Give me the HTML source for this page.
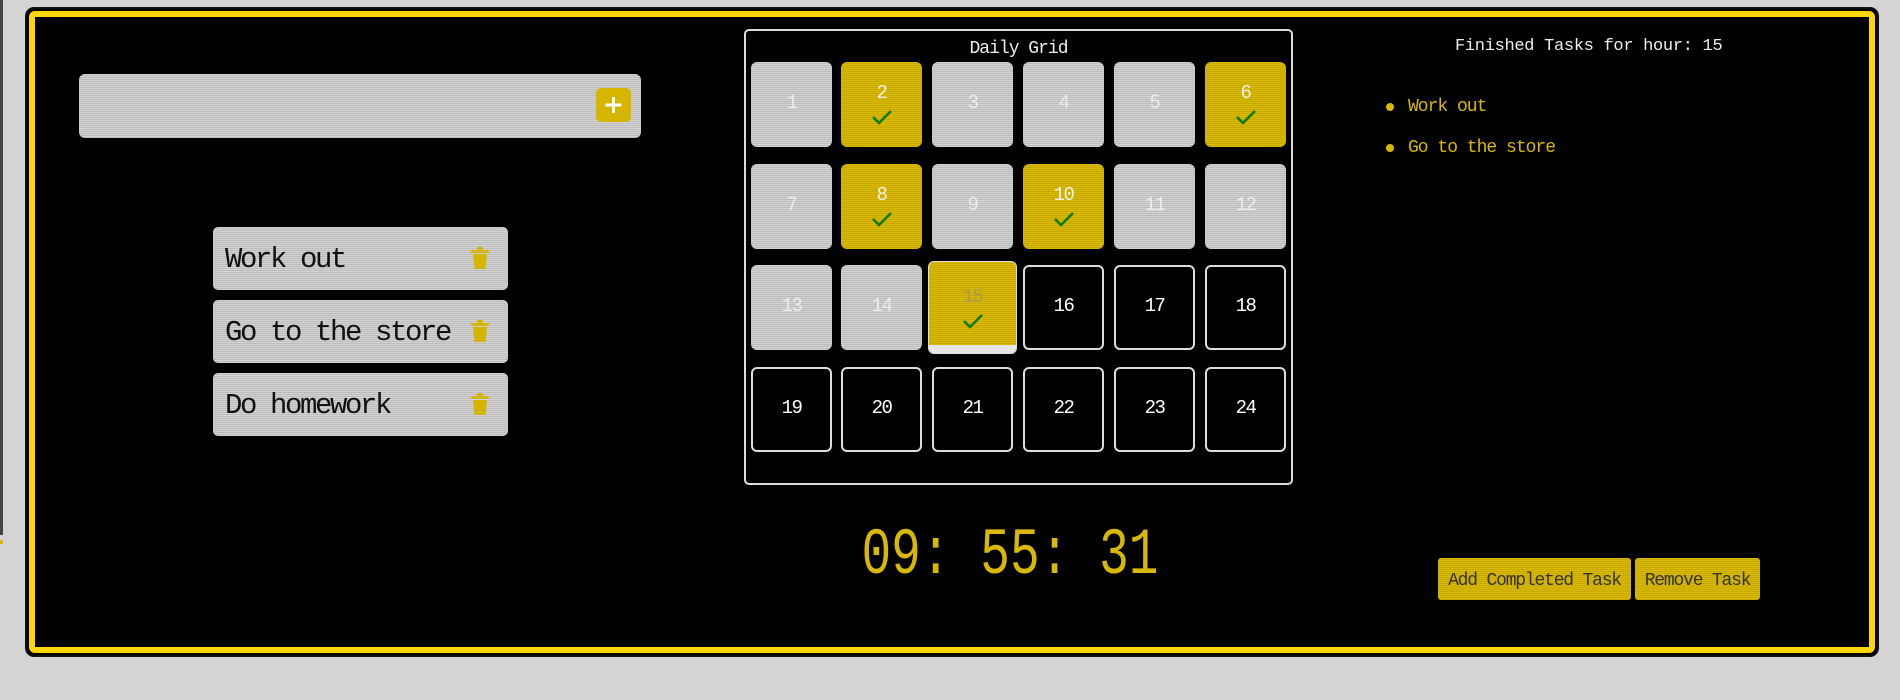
<!DOCTYPE html>
<html><head><meta charset="utf-8"><style>
*{margin:0;padding:0;box-sizing:border-box}
body{width:1900px;height:700px;background:#d4d4d4;position:relative;overflow:hidden;font-family:"Liberation Mono","NanumGothic",monospace}
.frame{position:absolute;left:25px;top:7px;width:1854px;height:650px;background:#000;border-radius:9px;border:2px solid #111}
.frame .y{position:absolute;left:2px;top:2px;right:2px;bottom:2px;border:6px solid #ffd500;border-radius:6px}
.stripe{background:repeating-linear-gradient(to bottom,#d2d2d2 0,#d2d2d2 1px,#bdbdbd 1px,#bdbdbd 2px)}
.ystripe{background:repeating-linear-gradient(to bottom,#d8b800 0,#d8b800 1px,#c9aa00 1px,#c9aa00 2px)}
.abs{position:absolute}
.input{left:79px;top:74px;width:562px;height:64px;border-radius:6px}
.plus{left:596px;top:88px;width:35px;height:34px;border-radius:5px;background:#d6b500}
.task{left:213px;width:295px;height:63px;border-radius:5px;font-size:29px;letter-spacing:-2.4px;color:#111;padding-left:12px;line-height:66px}
.trash{position:absolute;left:258px;top:20px}
.grid{left:744px;top:29px;width:549px;height:456px;border:2px solid #ddd;border-radius:5px}
.title{left:0;width:100%;top:8px;text-align:center;color:#eee;font-size:18px;letter-spacing:-1px}
.cell{position:absolute;width:81px;height:85px;border-radius:6px;text-align:center;font-size:19px;letter-spacing:-1.5px;color:#ececec}
.cell span{position:absolute;left:0;right:0;top:30px}
.cell.y span{top:20px;color:#f0f0f0}
.cell.b{background:#000;border:2px solid #ddd;color:#fff}
.cell svg{position:absolute;left:30px;top:47px}
.clock{left:810px;top:518px;width:400px;text-align:center;font-size:66px;color:#d8b800;transform:scaleX(0.75);letter-spacing:0}
.fin{left:1455px;top:37px;color:#eee;font-size:17px;letter-spacing:-0.3px}
.li{color:#d8b800;font-size:18px;letter-spacing:-1px}
.dot{width:8px;height:8px;border-radius:50%;background:#d8b800}
.btn{top:558px;height:42px;border-radius:3px;color:#333;font-size:18px;letter-spacing:-1.2px;line-height:46px;text-align:center}
</style></head><body>
<div class="abs" style="left:0;top:0;width:3px;height:535px;background:#444"></div>
<div class="abs" style="left:0;top:540px;width:3px;height:4px;background:#d8b800"></div>
<div class="frame"><div class="y"></div></div>

<div class="abs input stripe"></div>
<div class="abs plus"><svg width="35" height="34" viewBox="0 0 35 34"><path d="M17.5 9v16M9.5 17h16" stroke="#fff" stroke-width="3"/></svg></div>

<div class="abs task stripe" style="top:227px">Work out<svg class="trash" width="18" height="22" viewBox="0 0 18 22"><rect x="6" y="0" width="6" height="3" fill="#d6b500"/><rect x="0" y="3" width="18" height="3" rx="1" fill="#d6b500"/><path d="M2 7h14l-1.5 15h-11z" fill="#d6b500"/></svg></div>
<div class="abs task stripe" style="top:300px">Go to the store<svg class="trash" width="18" height="22" viewBox="0 0 18 22"><rect x="6" y="0" width="6" height="3" fill="#d6b500"/><rect x="0" y="3" width="18" height="3" rx="1" fill="#d6b500"/><path d="M2 7h14l-1.5 15h-11z" fill="#d6b500"/></svg></div>
<div class="abs task stripe" style="top:373px">Do homework<svg class="trash" width="18" height="22" viewBox="0 0 18 22"><rect x="6" y="0" width="6" height="3" fill="#d6b500"/><rect x="0" y="3" width="18" height="3" rx="1" fill="#d6b500"/><path d="M2 7h14l-1.5 15h-11z" fill="#d6b500"/></svg></div>

<div class="abs grid"><div class="abs title">Daily Grid</div></div>

<div class="abs" style="left:0;top:0">
<div class="cell stripe" style="left:751px;top:62px"><span>1</span></div>
<div class="cell ystripe y" style="left:841px;top:62px"><span>2</span><svg width="22" height="16" viewBox="0 0 22 16"><path d="M2 8l6 6L20 2" fill="none" stroke="#0a7a0a" stroke-width="2.5"/></svg></div>
<div class="cell stripe" style="left:932px;top:62px"><span>3</span></div>
<div class="cell stripe" style="left:1023px;top:62px"><span>4</span></div>
<div class="cell stripe" style="left:1114px;top:62px"><span>5</span></div>
<div class="cell ystripe y" style="left:1205px;top:62px"><span>6</span><svg width="22" height="16" viewBox="0 0 22 16"><path d="M2 8l6 6L20 2" fill="none" stroke="#0a7a0a" stroke-width="2.5"/></svg></div>
<div class="cell stripe" style="left:751px;top:164px"><span>7</span></div>
<div class="cell ystripe y" style="left:841px;top:164px"><span>8</span><svg width="22" height="16" viewBox="0 0 22 16"><path d="M2 8l6 6L20 2" fill="none" stroke="#0a7a0a" stroke-width="2.5"/></svg></div>
<div class="cell stripe" style="left:932px;top:164px"><span>9</span></div>
<div class="cell ystripe y" style="left:1023px;top:164px"><span>10</span><svg width="22" height="16" viewBox="0 0 22 16"><path d="M2 8l6 6L20 2" fill="none" stroke="#0a7a0a" stroke-width="2.5"/></svg></div>
<div class="cell stripe" style="left:1114px;top:164px"><span>11</span></div>
<div class="cell stripe" style="left:1205px;top:164px"><span>12</span></div>
<div class="cell stripe" style="left:751px;top:265px"><span>13</span></div>
<div class="cell stripe" style="left:841px;top:265px"><span>14</span></div>
<div class="cell ystripe y" style="left:928px;top:261px;width:89px;height:93px;border:1px solid #ddd;overflow:hidden"><span style="top:24px;color:#aa9a55">15</span><svg style="left:33px;top:51px" width="22" height="16" viewBox="0 0 22 16"><path d="M2 8l6 6L20 2" fill="none" stroke="#0a7a0a" stroke-width="2.5"/></svg><div style="position:absolute;left:0;right:0;bottom:0;height:8px;background:#e6e6e6"></div></div>
<div class="cell b" style="left:1023px;top:265px"><span style="top:28px">16</span></div>
<div class="cell b" style="left:1114px;top:265px"><span style="top:28px">17</span></div>
<div class="cell b" style="left:1205px;top:265px"><span style="top:28px">18</span></div>
<div class="cell b" style="left:751px;top:367px"><span style="top:28px">19</span></div>
<div class="cell b" style="left:841px;top:367px"><span style="top:28px">20</span></div>
<div class="cell b" style="left:932px;top:367px"><span style="top:28px">21</span></div>
<div class="cell b" style="left:1023px;top:367px"><span style="top:28px">22</span></div>
<div class="cell b" style="left:1114px;top:367px"><span style="top:28px">23</span></div>
<div class="cell b" style="left:1205px;top:367px"><span style="top:28px">24</span></div>
</div>

<div class="abs clock">09: 55: 31</div>

<div class="abs fin">Finished Tasks for hour: 15</div>
<div class="abs dot" style="left:1386px;top:103px"></div>
<div class="abs li" style="left:1408px;top:97px">Work out</div>
<div class="abs dot" style="left:1386px;top:144px"></div>
<div class="abs li" style="left:1408px;top:138px">Go to the store</div>

<div class="abs btn ystripe" style="left:1438px;width:193px">Add Completed Task</div>
<div class="abs btn ystripe" style="left:1635px;width:125px">Remove Task</div>
</body></html>
